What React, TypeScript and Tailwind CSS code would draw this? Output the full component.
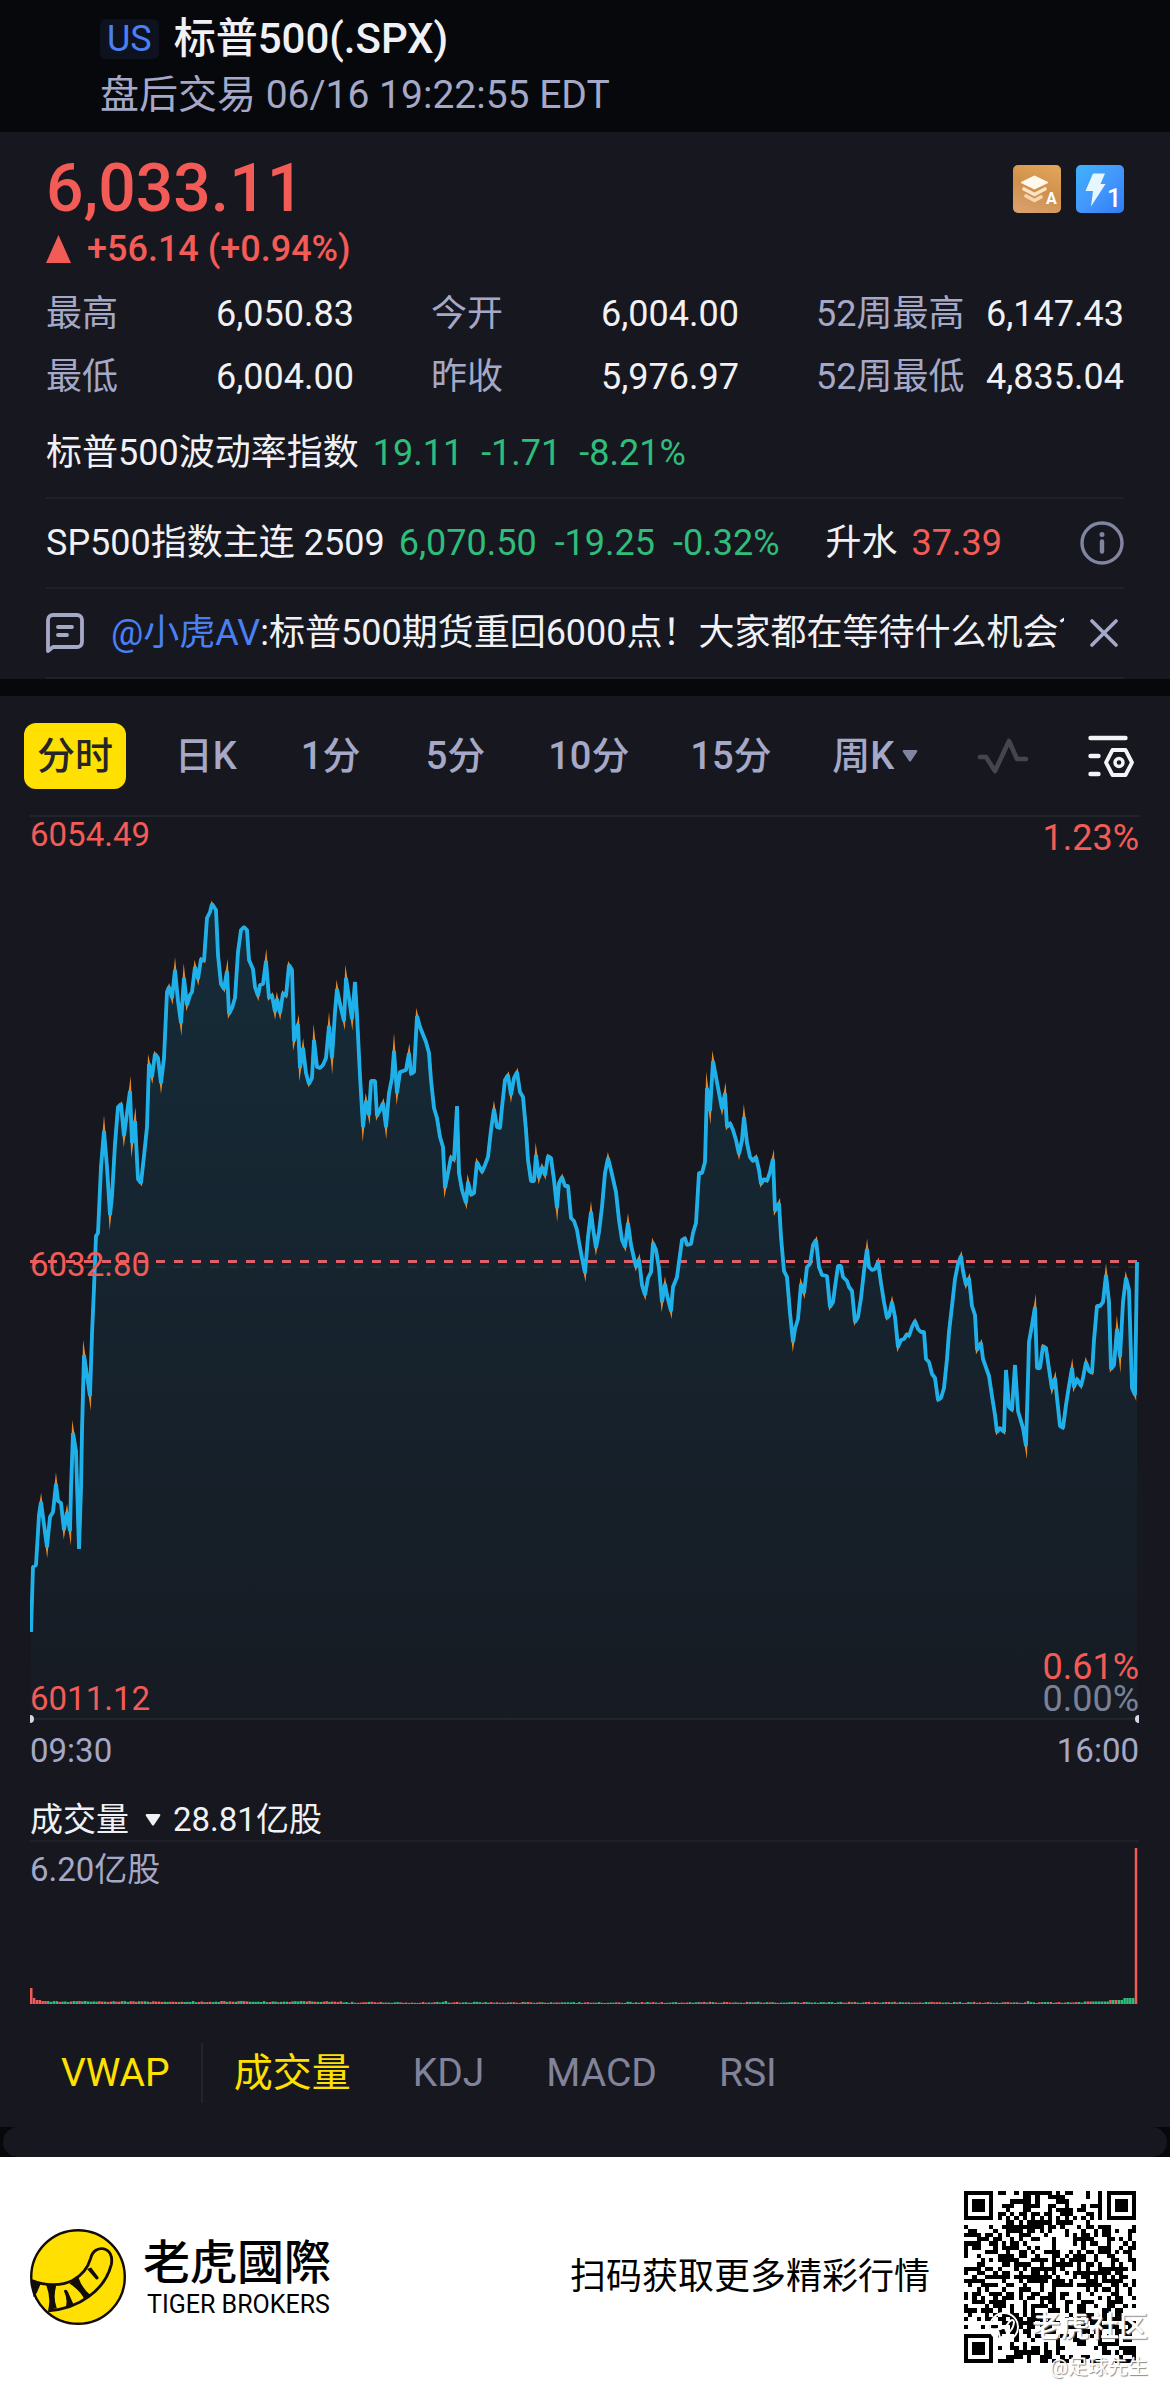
import React from 'react'

type Stat = { label: string; value: string }

const stats: Stat[] = [
  { label: '最高', value: '6,050.83' },
  { label: '今开', value: '6,004.00' },
  { label: '52周最高', value: '6,147.43' },
  { label: '最低', value: '6,004.00' },
  { label: '昨收', value: '5,976.97' },
  { label: '52周最低', value: '4,835.04' },
]

const periods = ['日K', '1分', '5分', '10分', '15分']

// x,y pairs in the 1109 x 908 chart space
const priceLine =
  '1,817 3,752 6,750 9,700 11,687 17,732 20,702 23,697 26,669 28,686 31,688 34,715 37,697 40,716 41,674 43,618 46,636 49,734 51,674 52,616 54,540 60,581 62,519 64,473 66,421 68,418 71,352 74,316 77,352 80,400 82,381 85,329 88,292 91,289 94,321 97,298 100,276 102,328 105,306 108,364 111,368 114,341 117,312 119,249 122,262 125,239 128,243 131,268 134,243 137,177 139,172 142,183 145,155 148,186 151,208 154,163 157,190 160,180 162,177 165,152 168,164 171,144 174,146 177,103 180,97 182,89 186,95 188,140 191,169 194,174 197,156 199,199 202,193 205,183 208,137 211,115 214,112 217,115 219,145 223,154 225,172 228,181 230,170 233,169 236,146 239,183 242,180 245,197 247,184 250,198 253,178 256,181 259,150 262,155 264,226 268,209 270,253 273,233 276,258 279,269 282,263 284,225 287,252 290,253 293,250 296,243 299,211 302,243 305,197 307,174 310,189 314,206 316,163 319,183 322,204 325,167 327,200 330,261 333,312 336,286 339,300 341,266 345,266 347,301 350,295 353,288 356,312 359,278 362,263 364,236 367,278 370,257 376,255 379,238 381,259 384,257 387,201 390,212 396,227 399,238 401,265 404,293 407,303 410,322 413,332 415,373 418,358 421,342 424,345 427,291 429,358 432,375 436,388 438,367 441,380 444,378 447,347 452,357 455,350 458,342 461,315 464,294 467,312 470,313 472,292 475,265 478,260 481,280 484,263 487,257 490,277 493,282 496,315 498,345 501,366 504,366 506,340 509,363 512,352 515,360 518,341 521,343 524,365 527,393 529,368 532,362 535,371 538,371 541,403 544,406 547,415 549,427 552,443 555,458 558,422 561,397 563,413 566,433 569,417 572,392 575,358 578,343 581,355 586,377 589,405 592,425 595,432 598,408 601,430 606,452 609,444 612,470 615,480 618,463 621,457 623,428 626,435 629,453 632,487 635,469 637,480 641,496 643,472 647,462 649,447 652,425 655,423 657,430 661,429 663,418 666,408 669,358 672,358 675,347 677,273 680,296 683,246 686,262 689,278 692,294 695,278 697,312 700,308 703,315 706,325 709,339 712,325 714,302 717,328 720,342 723,346 726,342 729,355 731,369 734,364 737,366 740,357 743,344 745,396 749,388 751,422 754,456 757,462 760,498 763,527 765,514 768,504 771,469 774,478 777,452 780,449 783,430 786,425 789,452 792,460 797,461 800,492 803,487 805,472 808,451 811,451 813,462 817,466 819,472 822,476 825,507 828,502 831,483 834,456 837,434 839,452 842,455 845,454 848,447 851,468 854,487 857,503 859,501 862,487 865,502 868,532 871,525 874,524 877,519 879,521 882,512 885,506 888,514 891,517 894,517 896,544 899,547 902,559 905,563 908,585 911,583 914,573 917,544 919,517 922,491 925,464 928,449 931,441 933,456 936,470 939,463 942,491 945,500 947,535 951,528 953,544 959,561 962,581 965,600 967,617 970,613 974,617 976,555 979,592 982,595 985,550 988,596 993,613 996,631 998,563 999,527 1002,510 1005,492 1007,553 1010,553 1013,531 1016,533 1019,554 1022,574 1025,563 1027,583 1030,611 1033,613 1036,590 1039,571 1042,553 1044,572 1047,564 1051,571 1053,563 1056,547 1059,556 1062,558 1064,525 1067,491 1070,491 1073,487 1076,460 1079,487 1081,554 1084,550 1087,514 1090,542 1093,487 1096,463 1099,475 1102,573 1105,580 1107,447'

// small deterministic hash, 0..1
const noise = (n: number) => {
  let h = Math.imul(n + 11, 2654435761)
  h ^= h >>> 15
  h = Math.imul(h, 2246822519)
  h ^= h >>> 13
  return (h >>> 0) / 4294967295
}

const volumeBars = Array.from({ length: 390 }, (_, i) => {
  let height = 1 + noise(i) * 1.2
  if (i < 110) height += 0.8
  if (i < 6) height = [16, 6, 4, 4, 3, 3][i]
  if ([19, 74, 95, 146, 351].includes(i)) height = 3
  if (i > 370) height = 2.5
  if (i > 379) height = 4
  if (i > 384) height = 6
  if (i === 389) height = 156
  const up = i < 6 || i === 389 || (i < 385 && noise(i * 7) > 0.48)
  return { x: i * 2.84, height, up }
})

const SIZE = 41

const finder = (x: number, y: number, fx: number, fy: number, size: number) => {
  const dx = x - fx
  const dy = y - fy
  if (dx < 0 || dy < 0 || dx >= size || dy >= size) return null
  const ring = Math.min(dx, dy, size - 1 - dx, size - 1 - dy)
  return ring !== 1
}

const qrPath = () => {
  let d = ''
  for (let y = 0; y < SIZE; y++) {
    for (let x = 0; x < SIZE; x++) {
      let on: boolean | null =
        finder(x, y, 0, 0, 7) ??
        finder(x, y, SIZE - 7, 0, 7) ??
        finder(x, y, 0, SIZE - 7, 7) ??
        finder(x, y, SIZE - 9, SIZE - 9, 5)
      if (on === null) {
        const quiet = (x < 8 && y < 8) || (x > SIZE - 9 && y < 8) || (x < 8 && y > SIZE - 9)
        if (quiet) on = false
        else if (x === 6 || y === 6) on = (x + y) % 2 === 0
        else on = noise(y * 53 + x) > 0.49
      }
      if (on) d += `M${x} ${y}h1v1h-1z`
    }
  }
  return d
}

const LayersBadge = () => (
  <svg className="size-12" viewBox="0 0 48 48" aria-hidden="true">
    <defs>
      <linearGradient id="gold" x1="0.7" y1="0" x2="0.3" y2="1">
        <stop offset="0" stopColor="#e0a357" />
        <stop offset="0.5" stopColor="#d0904c" />
        <stop offset="1" stopColor="#d9a06c" />
      </linearGradient>
    </defs>
    <rect width="48" height="48" rx="5" fill="url(#gold)" />
    <path d="M21.500 11 35 17.500 21.500 24 8 17.500z" fill="#fff8ec" stroke="#fff8ec" strokeLinejoin="round" />
    <path d="M11 24l10.500 5.500L32 24" fill="none" stroke="#fbe3c3" strokeWidth="3.600" strokeLinecap="round" strokeLinejoin="round" />
    <path d="M13 31l8.500 4.500L28 32" fill="none" stroke="#f5d7b2" strokeWidth="3.600" strokeLinecap="round" strokeLinejoin="round" />
    <text x="33" y="39" fontSize="16" fontWeight="700" fill="#fff" fontFamily="Roboto, sans-serif">A</text>
  </svg>
)

const FlashBadge = () => (
  <svg className="size-12" viewBox="0 0 48 48" aria-hidden="true">
    <defs>
      <linearGradient id="sky" x1="0" y1="0" x2="1" y2="1">
        <stop offset="0" stopColor="#3fb2fb" />
        <stop offset="0.5" stopColor="#4398fb" />
        <stop offset="1" stopColor="#2f7cf8" />
      </linearGradient>
    </defs>
    <rect width="48" height="48" rx="5" fill="url(#sky)" />
    <path d="M17 8.500h12L24.500 19h5L15 41.500l2-15.500H9.500z" fill="#e6f6ff" />
    <text x="31" y="42" fontSize="25" fontWeight="500" fill="#fff" fontFamily="Roboto, sans-serif">1</text>
  </svg>
)

const InfoIcon = () => (
  <svg className="size-11" viewBox="0 0 44 44" fill="none" stroke="#8285a0" aria-hidden="true">
    <circle cx="22" cy="22" r="20" strokeWidth="3.400" />
    <path d="M22 20.500v10" strokeWidth="4.400" strokeLinecap="round" />
    <circle cx="22" cy="13.500" r="2.500" fill="#8285a0" stroke="none" />
  </svg>
)

const CommentIcon = () => (
  <svg className="h-10 w-[38px] shrink-0" viewBox="0 0 38 40" fill="none" stroke="#a5a8c6" strokeWidth="3.800" strokeLinecap="round" strokeLinejoin="round" aria-hidden="true">
    <path d="M2 38V7a5 5 0 0 1 5-5h24a5 5 0 0 1 5 5v22a5 5 0 0 1-5 5H7z" />
    <path d="M12 14h14M12 22h9" />
  </svg>
)

const CloseIcon = () => (
  <svg className="size-7" viewBox="0 0 28 28" stroke="#a5a8c6" strokeWidth="3.600" strokeLinecap="round" aria-hidden="true">
    <path d="M2 2l24 24M26 2L2 26" />
  </svg>
)

const PulseIcon = () => (
  <svg className="h-9 w-[52px]" viewBox="0 0 52 36" fill="none" stroke="#44454f" strokeWidth="4.600" strokeLinecap="round" strokeLinejoin="round" aria-hidden="true">
    <path d="M3 19h6l9 14L32 3l8 18h9" />
  </svg>
)

const ChartSettingsIcon = () => (
  <svg className="h-[42px] w-[46px]" viewBox="0 0 46 42" fill="none" stroke="#f4f4f8" strokeLinecap="round" strokeLinejoin="round" aria-hidden="true">
    <path d="M2.500 3h35M2.500 21h8M2.500 39h8" strokeWidth="4.400" />
    <path d="M24.500 15h13L44 27.500 37.500 40h-13L18 27.500z" strokeWidth="3.800" />
    <circle cx="31" cy="27.500" r="4" strokeWidth="3.400" />
  </svg>
)

const TigerLogo = () => (
  <svg className="size-24 shrink-0" viewBox="0 0 95 95" aria-hidden="true">
    <circle cx="47.500" cy="47.500" r="46.300" fill="#ffe000" stroke="#120d0b" strokeWidth="2.400" />
    <path
      d="M2 51C16 57 32 56 42 51C53 45 58 36 60 29C62 21 68 19 72 19.500C79 20.500 82 27 80.500 35C77 49 69 59 58 67C46 76 32 80 18 81"
      fill="none"
      stroke="#120d0b"
      strokeWidth="2.800"
    />
    <path
      d="M1.500 50.500l9 4-4 9-3 4zM16 55.500l10 .5q-3.500 12 .5 22.500l-8.500 1.500q3-12-2-24.500zM33.500 61q2.500-2 4 1l5.500 12.500-8 4q3-8-1.500-17.500zM39 54l9-6q3 10 12 17.500L54 70q-4-9-15-16zM56.500 39.500l4-1.500 7.500 10q-.5 3-3 1.500z"
      fill="#120d0b"
    />
  </svg>
)

const App = () => {
  return (
    <div className="w-full bg-[#07080c] font-[Roboto,'Noto_Sans_CJK_SC',sans-serif] text-[#f1f1f5]">
      <header className="flex flex-col gap-2 px-[100px] pt-[15px] pb-[13px]">
        <div className="flex items-center gap-[15px]">
          <span className="rounded-md bg-[#0d121e] px-[7px] text-[36px] leading-10 text-[#4a80f5]">US</span>
          <h1 className="text-[42px] leading-[48px] font-medium">标普500(.SPX)</h1>
        </div>
        <p className="text-[39px] leading-[48px] text-[#a5a8c6]">盘后交易 06/16 19:22:55 EDT</p>
      </header>

      <section className="bg-[#17181f] px-[46px] pt-[21px]">
        <div className="flex items-start justify-between">
          <div className="font-medium text-[#f35b57]">
            <p className="text-[66px] leading-[72px]">6,033.11</p>
            <p className="flex items-center gap-4 text-[36px] leading-[48px]">
              <svg className="h-7 w-[25px]" viewBox="0 0 25 28" fill="currentColor" aria-hidden="true">
                <path d="M12.500 0 25 28H0z" />
              </svg>
              +56.14 (+0.94%)
            </p>
          </div>
          <div className="flex gap-[15px] pt-3">
            <LayersBadge />
            <FlashBadge />
          </div>
        </div>

        <dl className="mt-[10px] grid grid-cols-3 gap-x-[77px] text-[36px] leading-[63px] whitespace-nowrap">
          {stats.map((s) => (
            <div key={s.label} className="flex justify-between">
              <dt className="text-[#a5a8c6]">{s.label}</dt>
              <dd>{s.value}</dd>
            </div>
          ))}
        </dl>

        <div className="flex h-[90px] items-center gap-[14px] border-b-2 border-[#1f2028] text-[36px] whitespace-nowrap">
          <span>标普500波动率指数</span>
          <div className="flex gap-[18px] text-[#2fbd7b]">
            <span>19.11</span>
            <span>-1.71</span>
            <span>-8.21%</span>
          </div>
        </div>

        <div className="flex h-[90px] items-center gap-[14px] border-b-2 border-[#1f2028] text-[36px] whitespace-nowrap">
          <span>SP500指数主连 2509</span>
          <div className="flex gap-[18px] text-[#2fbd7b]">
            <span>6,070.50</span>
            <span>-19.25</span>
            <span>-0.32%</span>
          </div>
          <span className="ml-8">升水</span>
          <span className="text-[#f35b57]">37.39</span>
          <button type="button" aria-label="说明" className="ml-auto">
            <InfoIcon />
          </button>
        </div>

        <div className="flex h-[90px] items-center border-b-2 border-[#1f2028] text-[36px]">
          <CommentIcon />
          <p className="ml-[27px] min-w-0 flex-1 overflow-hidden whitespace-nowrap">
            <a href="#" className="text-[#4a80f5]">@小虎AV</a>
            :标普500期货重回6000点！大家都在等待什么机会？
          </p>
          <button type="button" aria-label="关闭" className="mr-[6px] ml-[26px]">
            <CloseIcon />
          </button>
        </div>
      </section>

      <main className="mt-[17px] bg-[#17181f]">
        <nav className="flex items-center justify-between pt-[27px] pr-[23px] pb-[26px] pl-6 text-[38px] font-medium text-[#a5a8c6]">
          <button type="button" className="h-[66px] rounded-xl bg-[#ffe000] px-[13px] text-[#26252a]">分时</button>
          {periods.map((p) => (
            <button key={p} type="button" className="h-[66px] min-w-[90px] px-[13px]">{p}</button>
          ))}
          <button type="button" className="flex h-[66px] items-center gap-2 px-[13px]">
            周K
            <svg className="h-3 w-4" viewBox="0 0 16 12" fill="#8285a0" aria-hidden="true">
              <path d="M2 0h12q2 0 1 2L9 11q-1 1-2 0L1 2q-1-2 1-2z" />
            </svg>
          </button>
          <button type="button" aria-label="走势" className="px-[11px]">
            <PulseIcon />
          </button>
          <button type="button" aria-label="图表设置" className="px-[13px]">
            <ChartSettingsIcon />
          </button>
        </nav>

        <div className="pr-[31px] pl-[30px]">
          <div className="relative text-[33px] leading-10 text-[#f35b57]">
            <svg className="block w-full" viewBox="0 0 1109 908" role="img" aria-label="分时走势">
              <defs>
                <linearGradient id="area" gradientUnits="userSpaceOnUse" x1="0" y1="80" x2="0" y2="904">
                  <stop offset="0" stopColor="#0aa5d8" stopOpacity="0.14" />
                  <stop offset="0.5" stopColor="#0aa5d8" stopOpacity="0.080" />
                  <stop offset="1" stopColor="#0aa5d8" stopOpacity="0.020" />
                </linearGradient>
              </defs>
              <path d="M0 1h1109M0 904h1109" stroke="#22242c" strokeWidth="2" />
              <polygon points={`1,904 ${priceLine} 1107,904`} fill="url(#area)" />
              <path d="M0 452h1109" stroke="#2a2f39" strokeWidth="1.500" strokeDasharray="9 9" />
              <polyline points={priceLine} fill="none" stroke="#e08a2c" strokeWidth="2.600" strokeMiterlimit="14" />
              <path d="M0 446.500h1109" stroke="#e0606a" strokeWidth="2.800" strokeDasharray="9 9" />
              <polyline points={priceLine} fill="none" stroke="#1fb0ea" strokeWidth="3.800" strokeLinejoin="bevel" />
              <path d="M0 900a4 4 0 0 1 0 8zM1109 900a4 4 0 0 0 0 8z" fill="#d5d7e8" />
            </svg>
            <span className="absolute top-0 left-0">6054.49</span>
            <span className="absolute top-[430px] left-0">6032.80</span>
            <span className="absolute bottom-1.5 left-0 leading-9">6011.12</span>
            <span className="absolute top-[3px] right-0 text-[36px]">1.23%</span>
            <div className="absolute right-0 bottom-2 flex flex-col text-right text-[36px] leading-8">
              <span>0.61%</span>
              <span className="text-[#7b8194]">0.00%</span>
            </div>
          </div>
          <div className="mt-2 flex justify-between text-[33px] leading-10 text-[#a5a8c6]">
            <span>09:30</span>
            <span>16:00</span>
          </div>

          <div className="mt-[29px] flex items-center gap-3 text-[33px] leading-10">
            <button type="button" className="flex items-center gap-4">
              成交量
              <svg className="h-3 w-4" viewBox="0 0 16 12" fill="currentColor" aria-hidden="true">
                <path d="M2 0h12q2 0 1 2L9 11q-1 1-2 0L1 2q-1-2 1-2z" />
              </svg>
            </button>
            <span>28.81亿股</span>
          </div>
          <div className="relative border-t-2 border-[#1f2028]">
            <svg className="block w-full" viewBox="0 0 1109 162" role="img" aria-label="成交量">
              {volumeBars.map((b) => (
                <rect key={b.x} x={b.x} y={162 - b.height} width="2.500" height={b.height} fill={b.up ? '#f35b57' : '#2fbd7b'} />
              ))}
            </svg>
            <span className="absolute top-2 left-0 text-[33px] leading-10 text-[#a5a8c6]">6.20亿股</span>
          </div>
        </div>

        <nav className="mt-[39px] flex px-[30px] pb-6 text-[39px] leading-[60px] text-[#82839a]">
          <button type="button" className="border-r-2 border-[#22242c] px-[31px] text-[#ffe000]">VWAP</button>
          <button type="button" className="px-[31px] text-[#ffe000]">成交量</button>
          <button type="button" className="px-[31px]">KDJ</button>
          <button type="button" className="px-[31px]">MACD</button>
          <button type="button" className="px-[31px]">RSI</button>
        </nav>
      </main>

      <div className="px-[3px]">
        <div className="h-[30px] rounded-2xl bg-[#17181f]" />
      </div>

      <footer className="flex items-center bg-white py-[34px] pr-[34px] pl-[30px] text-black">
        <TigerLogo />
        <div className="ml-[17px] flex flex-col gap-px pt-1">
          <span className="font-[Roboto,'Noto_Sans_CJK_TC',sans-serif] text-[47px] leading-[50px] font-medium">老虎國際</span>
          <span className="pl-1 text-[25px] leading-8">TIGER BROKERS</span>
        </div>
        <p className="ml-auto text-[36px]">扫码获取更多精彩行情</p>
        <div className="relative ml-[34px]">
          <svg className="size-[172px]" viewBox="0 0 41 41" shapeRendering="crispEdges" role="img" aria-label="二维码">
            <path d={qrPath()} />
          </svg>
          <div className="absolute -right-3 -bottom-6 flex flex-col items-end whitespace-nowrap text-white [text-shadow:1px_1px_1px_#888]">
            <span className="flex items-center gap-3 text-[29px] leading-10 font-medium">
              <svg className="size-8" viewBox="0 0 32 32" fill="none" stroke="#fff" strokeWidth="2" aria-hidden="true">
                <circle cx="16" cy="16" r="14" />
                <path d="M3 18q14 2 18-7 4-4 5 0-1 12-17 17M10 19l2 8M17 17l3 7" />
              </svg>
              老虎社区
            </span>
            <span className="text-[20px] leading-10">@足球先生</span>
          </div>
        </div>
      </footer>
    </div>
  )
}

export default App
